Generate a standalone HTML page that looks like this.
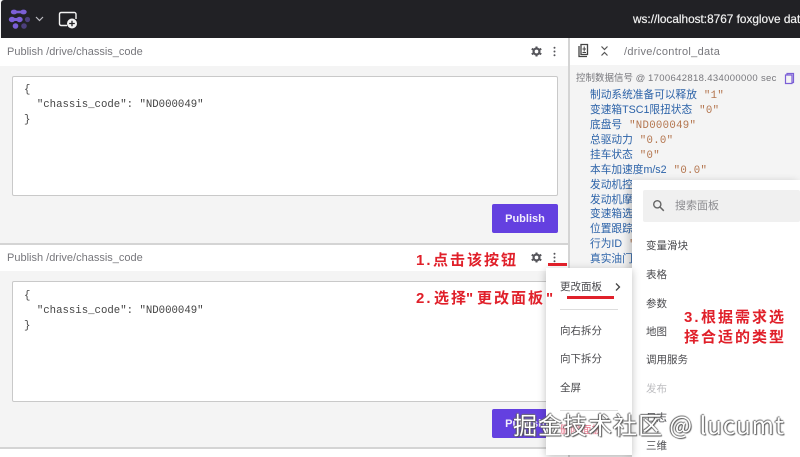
<!DOCTYPE html>
<html><head><meta charset="utf-8">
<style>
html,body{margin:0;padding:0;background:#fff}
#r{position:relative;width:800px;height:457px;overflow:hidden;background:#f4f4f4;font-family:"Liberation Sans","Noto Sans CJK SC",sans-serif}
#r div,#r svg{position:absolute}
.t{white-space:nowrap}
.hd{color:#77777c;font-size:11px;line-height:14px}
.box{background:#fff;border:1px solid #c9c9c9;border-radius:2px;box-sizing:border-box}
.code{font-family:"Liberation Mono","DejaVu Sans Mono",monospace;font-size:10.700px;line-height:15px;color:#444;white-space:pre}
.btn{background:#6440e0;border-radius:2px;color:#f2eefc;font-size:11px;font-weight:700;text-align:center;line-height:31px;width:66px;height:29px;left:492px}
.k{left:590px;color:#2b62a8;font-size:10.700px;line-height:14px;white-space:nowrap}
.k span{color:#b4764f;font-family:"Liberation Mono",monospace;font-size:10.700px;margin-left:7px;letter-spacing:.3px}
.m{color:#4a4a4e;font-size:10.500px;line-height:14px;white-space:nowrap}
.red{color:#e0202a;font-size:15px;font-weight:700;line-height:18px;white-space:nowrap;letter-spacing:2px}
</style></head><body><div id="r">
<div style="left:1px;top:0;width:799px;height:38px;background:#212125;border-top-left-radius:3px"></div>

<svg style="left:8px;top:9px" width="24" height="20" viewBox="0 0 24 20">
<g fill="#7b5fd6"><ellipse cx="6" cy="3" rx="3.200" ry="2.400"/><ellipse cx="15.500" cy="3" rx="3.200" ry="2.400"/><rect x="6" y="1.700" width="9.500" height="2.600"/>
<ellipse cx="4" cy="10.500" rx="3.200" ry="2.700"/><ellipse cx="11.500" cy="10.500" rx="3.200" ry="2.700"/><rect x="4" y="9" width="7.500" height="3"/>
<circle cx="7.500" cy="17" r="2.800"/></g>
<g fill="#4c3f7c"><circle cx="19.500" cy="10.500" r="2.600"/><circle cx="16" cy="17" r="2.800"/></g>
</svg>
<svg style="left:34px;top:15px" width="11" height="8" viewBox="0 0 11 8"><path d="M2 2l3.500 3.500L9 2" fill="none" stroke="#bdbdc2" stroke-width="1.200"/></svg>
<svg style="left:57px;top:10px" width="22" height="20" viewBox="0 0 22 20">
<path d="M10 15.500H4A1.800 1.800 0 0 1 2.500 14V4A1.800 1.800 0 0 1 4 2.500h13A1.800 1.800 0 0 1 19 4V9" fill="none" stroke="#f2f2f2" stroke-width="1.400"/>
<circle cx="15" cy="13.500" r="5" fill="#f4f4f4"/><path d="M15 10.700v5.600M12.200 13.500h5.600" stroke="#212125" stroke-width="1.300"/></svg>
<div class="t" style="left:633px;top:12px;color:#f0f0f0;font-size:11.800px;line-height:14px;-webkit-text-stroke:.2px #f0f0f0">ws://localhost:8767 foxglove dat</div>

<!-- left panels -->
<div style="left:0;top:38px;width:568px;height:28px;background:#fff"></div>
<div class="t hd" style="left:7px;top:45px">Publish /drive/chassis_code</div>
<svg style="left:531px;top:46px" width="11" height="11" viewBox="0 0 12 12"><circle cx="6" cy="6" r="3.200" fill="none" stroke="#55555a" stroke-width="2.400"/><path d="M6 .5v2M6 9.500v2M.8 3l1.800 1M9.400 8l1.800 1M.8 9l1.800-1M9.400 4l1.800-1" stroke="#55555a" stroke-width="2.200"/></svg>
<svg style="left:552px;top:46px" width="5" height="11" viewBox="0 0 5 11"><g fill="#55555a"><circle cx="2.500" cy="1.800" r="1"/><circle cx="2.500" cy="5.500" r="1"/><circle cx="2.500" cy="9.200" r="1"/></g></svg>
<div class="box" style="left:12px;top:76px;width:546px;height:120px"></div>
<div class="code" style="left:24px;top:83px">{
  "chassis_code": "ND000049"
}</div>
<div class="btn" style="top:204px">Publish</div>

<div style="left:0;top:243px;width:568px;height:2px;background:#d4d4d4"></div>
<div style="left:0;top:245px;width:568px;height:26px;background:#fff"></div>
<div class="t hd" style="left:7px;top:251px">Publish /drive/chassis_code</div>
<svg style="left:531px;top:252px" width="11" height="11" viewBox="0 0 12 12"><circle cx="6" cy="6" r="3.200" fill="none" stroke="#55555a" stroke-width="2.400"/><path d="M6 .5v2M6 9.500v2M.8 3l1.800 1M9.400 8l1.800 1M.8 9l1.800-1M9.400 4l1.800-1" stroke="#55555a" stroke-width="2.200"/></svg>
<svg style="left:552px;top:252px" width="5" height="11" viewBox="0 0 5 11"><g fill="#55555a"><circle cx="2.500" cy="1.800" r="1"/><circle cx="2.500" cy="5.500" r="1"/><circle cx="2.500" cy="9.200" r="1"/></g></svg>
<div class="box" style="left:12px;top:281px;width:546px;height:121px"></div>
<div class="code" style="left:24px;top:289px">{
  "chassis_code": "ND000049"
}</div>
<div class="btn" style="top:409px">Publish</div>
<div style="left:0;top:447px;width:568px;height:2px;background:#d4d4d4"></div>
<div style="left:0;top:449px;width:568px;height:8px;background:#fff"></div>

<!-- right panel -->
<div style="left:568px;top:38px;width:2px;height:419px;background:#d4d4d4"></div>
<div style="left:570px;top:38px;width:230px;height:27px;background:#fff"></div>
<svg style="left:576px;top:43px" width="15" height="16" viewBox="0 0 15 16"><path d="M3 3v10.500h8M5 1.500h6.500v10H5z" fill="none" stroke="#444" stroke-width="1.300"/><path d="M8.200 3.500v5M6.500 6h3.500M6.500 9.500h3.500" stroke="#444" stroke-width="1"/></svg>
<svg style="left:600px;top:45px" width="9" height="12" viewBox="0 0 9 12"><path d="M1.500 1.500l3 3 3-3M1.500 10.500l3-3 3 3" fill="none" stroke="#555" stroke-width="1.200"/></svg>
<div class="t hd" style="left:624px;top:45px;letter-spacing:.3px">/drive/control_data</div>
<div class="t" style="left:576px;top:72px;color:#77777c;font-size:9.500px;line-height:14px">控制数据信号 @ <span style="letter-spacing:.35px">1700642818.434000000 sec</span></div>
<svg style="left:784px;top:72px" width="11" height="13" viewBox="0 0 11 13"><path d="M3 3V1.500h6.500v9H8M1.500 3H8v8.500H1.500z" fill="none" stroke="#7b5fd6" stroke-width="1.200"/></svg>
<div class="k" style="top:88px">制动系统准备可以释放<span>"1"</span></div>
<div class="k" style="top:103px">变速箱TSC1限扭状态<span>"0"</span></div>
<div class="k" style="top:118px">底盘号<span>"ND000049"</span></div>
<div class="k" style="top:133px">总驱动力<span>"0.0"</span></div>
<div class="k" style="top:148px">挂车状态<span>"0"</span></div>
<div class="k" style="top:163px">本车加速度m/s2<span>"0.0"</span></div>
<div class="k" style="top:178px">发动机控</div>
<div class="k" style="top:193px">发动机摩</div>
<div class="k" style="top:207px">变速箱选</div>
<div class="k" style="top:222px">位置跟踪</div>
<div class="k" style="top:237px">行为ID<span>"</span></div>
<div class="k" style="top:252px">真实油门</div>

<!-- submenu -->
<div style="left:632px;top:180px;width:168px;height:277px;background:#fff;box-shadow:-3px 2px 8px rgba(0,0,0,.22)"></div>
<div style="left:643px;top:190px;width:157px;height:32px;background:#f0f0f0;border-radius:2px"></div>
<svg style="left:652px;top:199px" width="13" height="13" viewBox="0 0 13 13"><circle cx="5.300" cy="5.300" r="3.600" fill="none" stroke="#666" stroke-width="1.400"/><path d="M8 8l3.800 3.800" stroke="#666" stroke-width="1.500"/></svg>
<div class="t" style="left:675px;top:198px;font-size:11px;line-height:16px;color:#8b8b8f">搜索面板</div>
<div class="m" style="left:646px;top:239px">变量滑块</div>
<div class="m" style="left:646px;top:268px">表格</div>
<div class="m" style="left:646px;top:297px">参数</div>
<div class="m" style="left:646px;top:325px">地图</div>
<div class="m" style="left:646px;top:353px">调用服务</div>
<div class="m" style="left:646px;top:382px;color:#bdbdc0">发布</div>
<div class="m" style="left:646px;top:411px">日志</div>
<div class="m" style="left:646px;top:439px">三维</div>

<!-- menu -->
<div style="left:546px;top:268px;width:86px;height:187px;background:#fff;box-shadow:0 2px 8px rgba(0,0,0,.25)"></div>
<div class="m" style="left:560px;top:280px">更改面板</div>
<svg style="left:614px;top:282px" width="8" height="10" viewBox="0 0 8 10"><path d="M2 1.500l3.500 3.500L2 8.500" fill="none" stroke="#444" stroke-width="1.300"/></svg>
<div style="left:560px;top:309px;width:58px;height:1px;background:#ddd"></div>
<div class="m" style="left:560px;top:324px">向右拆分</div>
<div class="m" style="left:560px;top:352px">向下拆分</div>
<div class="m" style="left:560px;top:381px">全屏</div>
<div style="left:560px;top:410px;width:58px;height:1px;background:#ddd"></div>
<div class="m" style="left:560px;top:423px;color:#e9738a">删除面板</div>

<!-- annotations -->
<div style="left:548px;top:263px;width:19px;height:3px;background:#e0202a"></div>
<div style="left:567px;top:296px;width:47px;height:3px;background:#e0202a"></div>
<div class="red" style="left:416px;top:252px">1.</div>
<div class="red" style="left:433px;top:252px">点击该按钮</div>
<div class="red" style="left:416px;top:290px">2.</div>
<div class="red" style="left:434px;top:290px">选择</div>
<div class="red" style="left:466px;top:290px;letter-spacing:0">"</div>
<div class="red" style="left:477px;top:290px">更改面板</div>
<div class="red" style="left:546px;top:290px;letter-spacing:0">"</div>
<div class="red" style="left:684px;top:309px">3.</div>
<div class="red" style="left:701px;top:309px">根据需求选</div>
<div class="red" style="left:684px;top:329px">择合适的类型</div>

<!-- watermark -->
<div class="t" style="left:513px;top:408px;font-family:'Noto Sans CJK SC',sans-serif;font-size:24px;line-height:32px;color:#fff;text-shadow:1px 1px 1px #555,-1px 0 1px #555,0 -1px 1px #777;letter-spacing:1px">掘金技术社区 @ lucumt</div>
</div></body></html>
